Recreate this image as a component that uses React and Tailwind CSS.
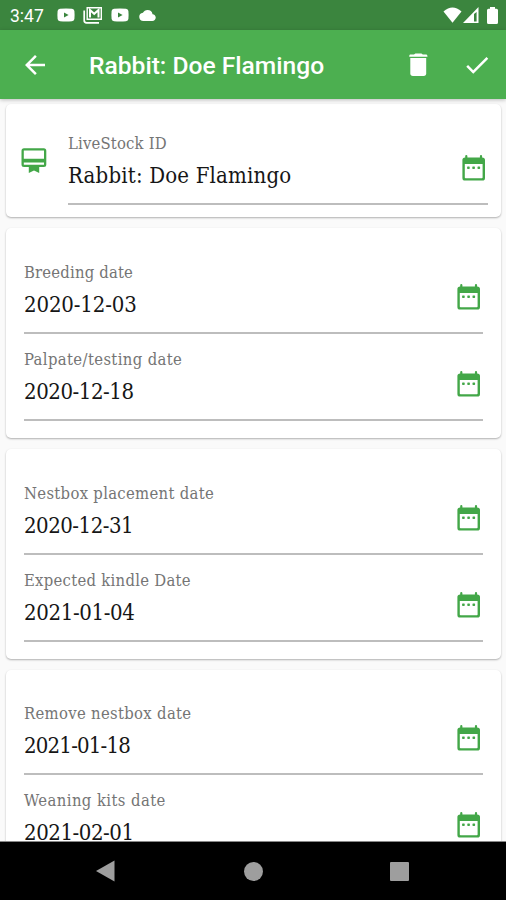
import React from "react";

const slab = "font-['Roboto_Slab','DejaVu_Serif_Condensed','DejaVu_Serif',serif] [font-stretch:condensed]";

const CalendarIcon = () => (
  <svg viewBox="0 0 30 30" className="relative -top-px size-[30px] shrink-0 fill-[#43a748]">
    <path fillRule="evenodd" d="M7.2 4.4V3.2A1.1 1.1 0 0 1 9.4 3.2V4.4H21.9V3.2A1.1 1.1 0 0 1 24.1 3.2V4.4Q27 4.4 27 7V25Q27 27.6 24.4 27.6H7Q4.4 27.6 4.4 25V7Q4.4 4.4 7.2 4.4ZM6.8 11V24.5Q6.8 25.3 7.6 25.3H23.8Q24.6 25.3 24.6 24.5V11Z" />
    <rect x="9.1" y="13.4" width="2.6" height="2.5" rx=".6" />
    <rect x="14.3" y="13.4" width="2.6" height="2.5" rx=".6" />
    <rect x="19.5" y="13.4" width="2.6" height="2.5" rx=".6" />
  </svg>
);

const YoutubeIcon = () => (
  <svg viewBox="0 0 18 14" className="h-[14px] w-[18px]">
    <path fillRule="evenodd" fill="#fff" d="M3 .8Q9 .1 15 .8Q17.2 1 17.4 3Q17.8 7 17.4 11Q17.2 13 15 13.2Q9 13.8 3 13.2Q.8 13 .6 11Q.2 7 .6 3Q.8 1 3 .8ZM7 4.4V9.6L11.6 7Z" />
  </svg>
);

function Field({ label, value, labelSpacing, valueSpacing }) {
  return (
    <div className="flex h-[87px] shrink-0 flex-col border-b-2 border-[#bdbdbd]">
      <div className={`mt-[16px] h-[20px] whitespace-nowrap text-[16.5px] leading-[20px] text-[#757575] ${slab} ${labelSpacing}`}>{label}</div>
      <div className="flex h-[30px] items-center justify-between">
        <div className={`mt-[14px] whitespace-nowrap text-[22px] leading-[30px] text-[#161616] ${slab} ${valueSpacing}`}>{value}</div>
        <CalendarIcon />
      </div>
    </div>
  );
}

function Card({ children, size }) {
  return (
    <section className={`flex shrink-0 flex-col rounded-[5px] bg-white pl-[18px] pr-[18px] shadow-[0_1px_2px_rgba(0,0,0,0.3)] ${size}`}>
      {children}
    </section>
  );
}

export default function App() {
  return (
    <div className="flex h-[900px] w-[506px] flex-col overflow-hidden bg-[#fafafa] font-[Roboto,sans-serif]">
      <div className="flex h-[30px] shrink-0 items-center bg-[#3b853e] pl-[10px] pr-[8px] text-white">
        <span className="w-[47px] pt-[2px] text-[17.5px] leading-[20px]">3:47</span>
        <YoutubeIcon />
        <svg viewBox="0 0 20 18" className="ml-[8px] h-[18px] w-[20px]" fill="none" stroke="#fff">
          <path strokeWidth="1.7" d="M1.2 4.5V14.5Q1.2 16.8 3.5 16.8H16" />
          <path strokeWidth="1.4" d="M4.2 1.7H18.3V13.3H4.2Z" />
          <path strokeWidth="2" d="M7 11.5V4L11.2 7.8L15.5 4V11.5" />
        </svg>
        <span className="ml-[8px] flex"><YoutubeIcon /></span>
        <svg viewBox="0 0 24 16" className="ml-[10px] h-[11px] w-[17px] fill-white">
          <path d="M19.35 6.04A7.49 7.49 0 0 0 12 0C9.11 0 6.6 1.64 5.35 4.04A5.994 5.994 0 0 0 0 10c0 3.31 2.69 6 6 6h13c2.76 0 5-2.24 5-5 0-2.64-2.05-4.78-4.65-4.96z" />
        </svg>
        <svg viewBox="0 0 19 16" className="ml-auto h-[16px] w-[19px] fill-white"><path d="M.5 4.4Q9.5-3.6 18.5 4.4L9.5 15.7Z" /></svg>
        <svg viewBox="0 0 16 16" className="ml-[1px] h-[16px] w-[16px]"><path fill="#fff" fillRule="evenodd" d="M0 16L15.5 0V16ZM11 7V14.4H13.6V5Z" /></svg>
        <svg viewBox="0 0 11 17" className="ml-[8px] h-[17px] w-[11px] fill-white"><path d="M3 0H8V1.8H9.5Q11 1.8 11 3.3V15.5Q11 17 9.5 17H1.5Q0 17 0 15.5V3.3Q0 1.8 1.5 1.8H3Z" /></svg>
      </div>

      <header className="relative z-10 flex h-[69px] shrink-0 items-center bg-[#4caf50] pl-[20px] pr-[14px] text-white shadow-[0_1px_4px_rgba(0,0,0,0.25)]">
        <svg viewBox="0 0 24 24" className="size-[30px] fill-white"><path d="M20 11H7.83l5.59-5.59L12 4l-8 8 8 8 1.41-1.41L7.83 13H20v-2z" /></svg>
        <h1 className="ml-[39px] whitespace-nowrap pt-[2px] text-[24.6px] font-medium leading-[30px]">Rabbit: Doe Flamingo</h1>
        <svg viewBox="0 0 30 30" className="ml-auto size-[30px] fill-white">
          <path d="M7 4.4H11L12.4 3.4H18.4L19.8 4.4H23.5Q24.5 4.5 24.5 6.7H6.2Q6.2 4.5 7 4.4Z" />
          <path d="M7.3 8H23.2V23.3Q23.2 26 20.6 26H9.9Q7.3 26 7.3 23.3Z" />
        </svg>
        <svg viewBox="0 0 24 24" className="ml-[29px] size-[30px] fill-white"><path d="M9 16.17L4.83 12l-1.42 1.41L9 19 21 7l-1.41-1.41z" /></svg>
      </header>

      <main className="flex min-h-0 flex-1 flex-col gap-[11px] overflow-hidden px-[6px] pr-[5px] pt-[5px]">
        <section className="flex h-[113px] shrink-0 rounded-[5px] bg-white pl-[13px] pr-[13px] shadow-[0_1px_2px_rgba(0,0,0,0.3)]">
          <svg viewBox="0 0 30 30" className="mt-[42px] size-[30px] shrink-0 fill-[#43a748]">
            <path fillRule="evenodd" d="M5 2.2H24.8Q27.3 2.2 27.3 4.7V18.4Q27.3 20.9 24.8 20.9H20.2V27L15 24.6L9.8 27V20.9H5Q2.5 20.9 2.5 18.4V4.7Q2.5 2.2 5 2.2ZM4.8 4.5V12.8H25V4.5ZM4.8 16.4V18.7H25V16.4Z" />
          </svg>
          <div className="ml-[19px] mt-[14px] flex-1">
            <Field label="LiveStock ID" value="Rabbit: Doe Flamingo" labelSpacing="tracking-[0.18px]" valueSpacing="tracking-[0.18px]" />
          </div>
        </section>
        <Card size="h-[210px] pt-[19px]">
          <Field label="Breeding date" value="2020-12-03" labelSpacing="tracking-[0.18px]" valueSpacing="tracking-[-0.15px]" />
          <Field label="Palpate/testing date" value="2020-12-18" labelSpacing="tracking-[0.37px]" valueSpacing="tracking-[-0.45px]" />
        </Card>
        <Card size="h-[210px] pt-[19px]">
          <Field label="Nestbox placement date" value="2020-12-31" labelSpacing="tracking-[0.31px]" valueSpacing="tracking-[-0.5px]" />
          <Field label="Expected kindle Date" value="2021-01-04" labelSpacing="tracking-[0.28px]" valueSpacing="tracking-[-0.37px]" />
        </Card>
        <Card size="h-[210px] pt-[18px]">
          <Field label="Remove nestbox date" value="2021-01-18" labelSpacing="tracking-[0.32px]" valueSpacing="tracking-[-0.8px]" />
          <Field label="Weaning kits date" value="2021-02-01" labelSpacing="tracking-[0.41px]" valueSpacing="tracking-[-0.45px]" />
        </Card>
      </main>

      <nav className="flex h-[59px] shrink-0 items-center justify-between border-t border-[#888] bg-black pl-[96px] pr-[97px]">
        <svg viewBox="0 0 19 22" className="h-[22px] w-[19px] fill-[#9e9e9e]"><path d="M0 11L18.5 .5V21.5Z" /></svg>
        <div className="ml-[1px] size-[19px] rounded-full bg-[#9e9e9e]" />
        <div className="size-[19px] rounded-[1px] bg-[#9e9e9e]" />
      </nav>
    </div>
  );
}
